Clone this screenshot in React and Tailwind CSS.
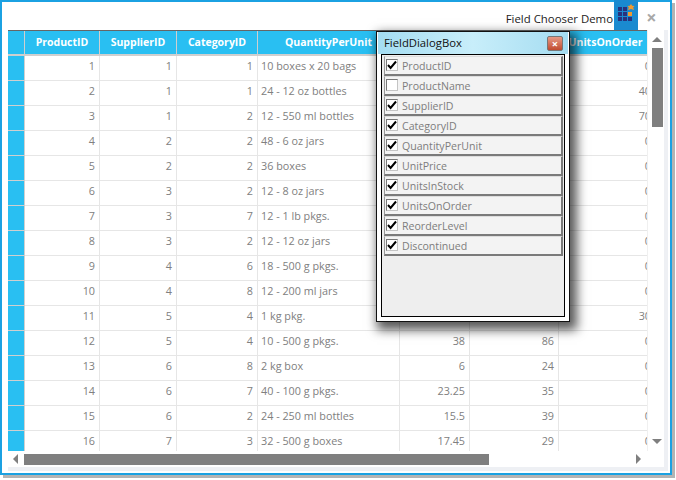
const products = [
    [1, 1, 1, '10 boxes x 20 bags', '', '', '0'],
    [2, 1, 1, '24 - 12 oz bottles', '', '', '40'],
    [3, 1, 2, '12 - 550 ml bottles', '', '', '70'],
    [4, 2, 2, '48 - 6 oz jars', '', '', '0'],
    [5, 2, 2, '36 boxes', '', '', '0'],
    [6, 3, 2, '12 - 8 oz jars', '', '', '0'],
    [7, 3, 7, '12 - 1 lb pkgs.', '', '', '0'],
    [8, 3, 2, '12 - 12 oz jars', '', '', '0'],
    [9, 4, 6, '18 - 500 g pkgs.', '', '', '0'],
    [10, 4, 8, '12 - 200 ml jars', '', '', '0'],
    [11, 5, 4, '1 kg pkg.', '', '', '30'],
    [12, 5, 4, '10 - 500 g pkgs.', '38', '86', '0'],
    [13, 6, 8, '2 kg box', '6', '24', '0'],
    [14, 6, 7, '40 - 100 g pkgs.', '23.25', '35', '0'],
    [15, 6, 2, '24 - 250 ml bottles', '15.5', '39', '0'],
    [16, 7, 3, '32 - 500 g boxes', '17.45', '29', '0'],
];

const fields = [
    ['ProductID', true],
    ['ProductName', false],
    ['SupplierID', true],
    ['CategoryID', true],
    ['QuantityPerUnit', true],
    ['UnitPrice', true],
    ['UnitsInStock', true],
    ['UnitsOnOrder', true],
    ['ReorderLevel', true],
    ['Discontinued', true],
];

const headers = ['ProductID', 'SupplierID', 'CategoryID', 'QuantityPerUnit', 'UnitPrice', 'UnitsInStock', 'UnitsOnOrder'];
const gridCols = 'grid grid-cols-[17px_75px_77px_81px_142px_70px_89px_96px] w-[647px]';

const FieldRow = ({ name, checked }) => (
    <div className="h-[20px] flex items-center gap-[4px] pl-[1px] bg-[#f3f3f3] border border-t-[#dcdcdc] border-l-[#9a9a9a] border-r-[#7a7a7a] border-b-[#7a7a7a] border-r-2 border-b-2">
        <span className="w-[12px] h-[12px] -mt-[1px] bg-white border border-t-[#777777] border-l-[#777777] border-r-[#c4c4c4] border-b-[#c4c4c4] flex items-center justify-center shrink-0">
            {checked && (
                <svg width="10" height="10" viewBox="0 0 10 10">
                    <path d="M1 5 L3.6 8 L9 1.5" fill="none" stroke="#000" strokeWidth="2" />
                </svg>
            )}
        </span>
        <span className="text-[10.6px] text-[#7d7d7d] mt-[3px]">{name}</span>
    </div>
);

const App = () => {
    return (
        <div className="relative w-[676px] h-[480px] bg-white overflow-hidden font-['Open_Sans',sans-serif]">
            {/* Window frame */}
            <div className="w-[672px] h-[475px] border-2 border-[#1ba1e2] bg-white shadow-[3px_3px_0_#b4b4b4] flex flex-col">
                <div className="h-[28px] flex justify-end shrink-0">
                    <span className="text-[11.4px] text-[#222222] mt-[8px] mr-[1px]">Field Chooser Demo</span>
                    <div className="w-[24px] h-[30px] -mt-[2px] pt-[4px] bg-[#1a8ad0] flex justify-center">
                        <svg width="18" height="18" viewBox="0 0 18 18">
                            <rect x="1" y="3" width="4" height="4" fill="#28327e" />
                            <rect x="6" y="3" width="4" height="4" fill="#28327e" />
                            <rect x="1" y="8" width="4" height="4" fill="#28327e" />
                            <rect x="6" y="8" width="4" height="4" fill="#28327e" />
                            <rect x="11" y="8" width="4" height="4" fill="#f09a30" />
                            <rect x="1" y="13" width="4" height="4" fill="#28327e" />
                            <rect x="6" y="13" width="4" height="4" fill="#28327e" />
                            <rect x="11" y="13" width="4" height="4" fill="#28327e" />
                            <path d="M14 0 L15.2 1.8 L17.5 2 L16.2 3.6 L17 6 L14 5 L11 6 L11.8 3.6 L10.5 2 L12.8 1.8 Z" fill="#f09a30" />
                        </svg>
                    </div>
                    <div className="w-[27px] h-[30px] -mt-[2px] pt-[4px] mr-[5px] flex items-center justify-center text-[18px] font-bold text-[#a8a8a8]">×</div>
                </div>

                {/* Grid and scrollbars */}
                <div className="flex flex-1 min-h-0 ml-[6px] mr-[2px] mb-[2px] border-r-4 border-b-4 border-[#eef0f4]">
                    <div className="w-[639px] flex flex-col border-t border-[#666666]">
                        <div className="flex-1 min-h-0 overflow-hidden">
                            <div className={`${gridCols} h-[25px] bg-[#29bff2] border-b-2 border-[#cfcfcf]`}>
                                <div className="border-r border-[#cfcfcf]" />
                                {headers.map((h, i) => (
                                    <div
                                        key={h}
                                        className={`text-[10.5px] font-bold text-white flex items-center justify-center ${i < 6 ? 'border-r border-[#cfcfcf]' : 'pr-[3px]'}`}
                                    >
                                        {h}
                                    </div>
                                ))}
                            </div>
                            {products.map((row) => (
                                <div key={row[0]} className={`${gridCols} h-[25px] border-b border-[#e6e6e6] [&>*]:bg-white`}>
                                    <div className="!bg-[#29bff2] border-r border-[#cfcfcf] -mb-px border-b border-b-[#cfcfcf]" />
                                    {row.map((cell, i) => (
                                        <div
                                            key={i}
                                            className={`text-[10.8px] text-[#808080] pt-[2px] ${i === 3 ? 'text-left pl-[3px]' : 'text-right pr-[4px]'} ${i < 6 ? 'border-r border-[#e6e6e6]' : ''}`}
                                        >
                                            {cell}
                                        </div>
                                    ))}
                                </div>
                            ))}
                        </div>
                        {/* Horizontal scrollbar */}
                        <div className="h-[16px] flex items-center shrink-0">
                            <span className="ml-[5px] w-0 h-0 border-y-[5px] border-y-transparent border-r-[5px] border-r-[#7f7f7f]" />
                            <div className="ml-[6px] w-[465px] h-[11px] bg-[#7f7f7f]" />
                            <span className="ml-[147px] w-0 h-0 border-y-[5px] border-y-transparent border-l-[5px] border-l-[#7f7f7f]" />
                        </div>
                    </div>

                    {/* Vertical scrollbar */}
                    <div className="w-[17px] h-[421px] flex flex-col items-center pl-[2px] pt-[7px] border-l border-[#f0f0f0]">
                        <span className="w-0 h-0 border-x-[5px] border-x-transparent border-b-[5px] border-b-[#7f7f7f]" />
                        <div className="mt-[6px] w-[11px] h-[79px] bg-[#7f7f7f]" />
                        <span className="mt-auto mb-[7px] w-0 h-0 border-x-[5px] border-x-transparent border-t-[5px] border-t-[#7f7f7f]" />
                    </div>
                </div>
            </div>

            {/* Field chooser dialog */}
            <div className="absolute left-[376px] top-[31px] w-[194px] h-[291px] bg-white border border-[#111111] shadow-[4px_5px_10px_3px_rgba(0,0,0,0.65)] flex flex-col">
                <div className="h-[22px] shrink-0 mx-px flex items-center justify-between pl-[6px] pr-[5px] bg-gradient-to-r from-[#a4ddf2] via-[#c8eefa] to-[#a4dcf1]">
                    <span className="text-[11.3px] text-[#111111]">FieldDialogBox</span>
                    <span className="w-[16px] h-[15px] rounded-[2px] border border-[#777777] bg-gradient-to-b from-[#e59a86] to-[#c04a2e] flex items-center justify-center text-[11px] leading-none font-bold text-white">×</span>
                </div>
                <div className="flex-1 mx-[4px] mb-[4px] border border-black bg-[#eeeeee] pt-[1px] pl-[2px] pr-[1px] flex flex-col">
                    {fields.map(([name, checked]) => (
                        <FieldRow key={name} name={name} checked={checked} />
                    ))}
                </div>
            </div>
        </div>
    );
};

export default App;
